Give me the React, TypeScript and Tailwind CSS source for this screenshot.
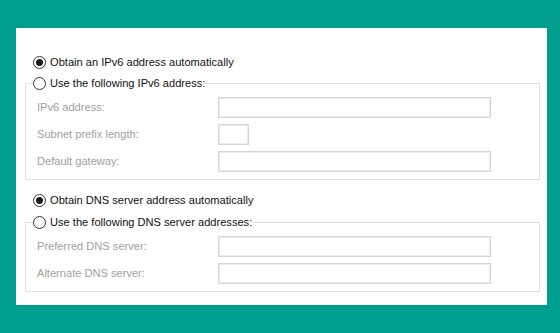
import React from "react";

function Radio({ checked }: { checked?: boolean }) {
  return (
    <span className="flex h-[13px] w-[13px] shrink-0 items-center justify-center rounded-full border border-[#333333] bg-white">
      {checked ? <span className="h-[7px] w-[7px] rounded-full bg-[#1a1a1a]" /> : null}
    </span>
  );
}

function RadioLine({ checked, label }: { checked?: boolean; label: string }) {
  return (
    <div className="flex h-[16px] items-center gap-[4px] leading-[16px]">
      <Radio checked={checked} />
      <span>{label}</span>
    </div>
  );
}

function Field({ label, small }: { label: string; small?: boolean }) {
  return (
    <div className="flex h-[21px] items-center">
      <span className="w-[185px] pl-[4px] text-[#a0a0a0]">{label}</span>
      <div
        className={
          "h-[21px] border border-[#d4d4d4] bg-white shadow-[inset_0_0_0_1px_#ececec] " +
          (small ? "w-[31px]" : "w-[273px]")
        }
      />
    </div>
  );
}

export default function App() {
  return (
    <div
      className="h-[333px] w-[560px] bg-[#009e8f] pl-[16px] pt-[28px] text-[11.1px] text-[#111111]"
      style={{ fontFamily: '"Liberation Sans", Arial, sans-serif' }}
    >
      <div className="h-[277px] w-[531px] bg-white pl-[9px] pt-[26px]">
        <div className="pl-[8px]">
          <RadioLine checked label="Obtain an IPv6 address automatically" />
        </div>
        <fieldset className="mt-[5px] w-[515px] border border-[#dedede] px-[7px] pb-[7px]">
          <legend className="p-0">
            <RadioLine label="Use the following IPv6 address:" />
          </legend>
          <div className="mt-[6px] flex flex-col gap-[6px]">
            <Field label="IPv6 address:" />
            <Field label="Subnet prefix length:" small />
            <Field label="Default gateway:" />
          </div>
        </fieldset>
        <div className="mt-[12px] pl-[8px]">
          <RadioLine checked label="Obtain DNS server address automatically" />
        </div>
        <fieldset className="mt-[6px] w-[515px] border border-[#dedede] px-[7px] pb-[7px]">
          <legend className="p-0">
            <RadioLine label="Use the following DNS server addresses:" />
          </legend>
          <div className="mt-[6px] flex flex-col gap-[6px]">
            <Field label="Preferred DNS server:" />
            <Field label="Alternate DNS server:" />
          </div>
        </fieldset>
      </div>
    </div>
  );
}
